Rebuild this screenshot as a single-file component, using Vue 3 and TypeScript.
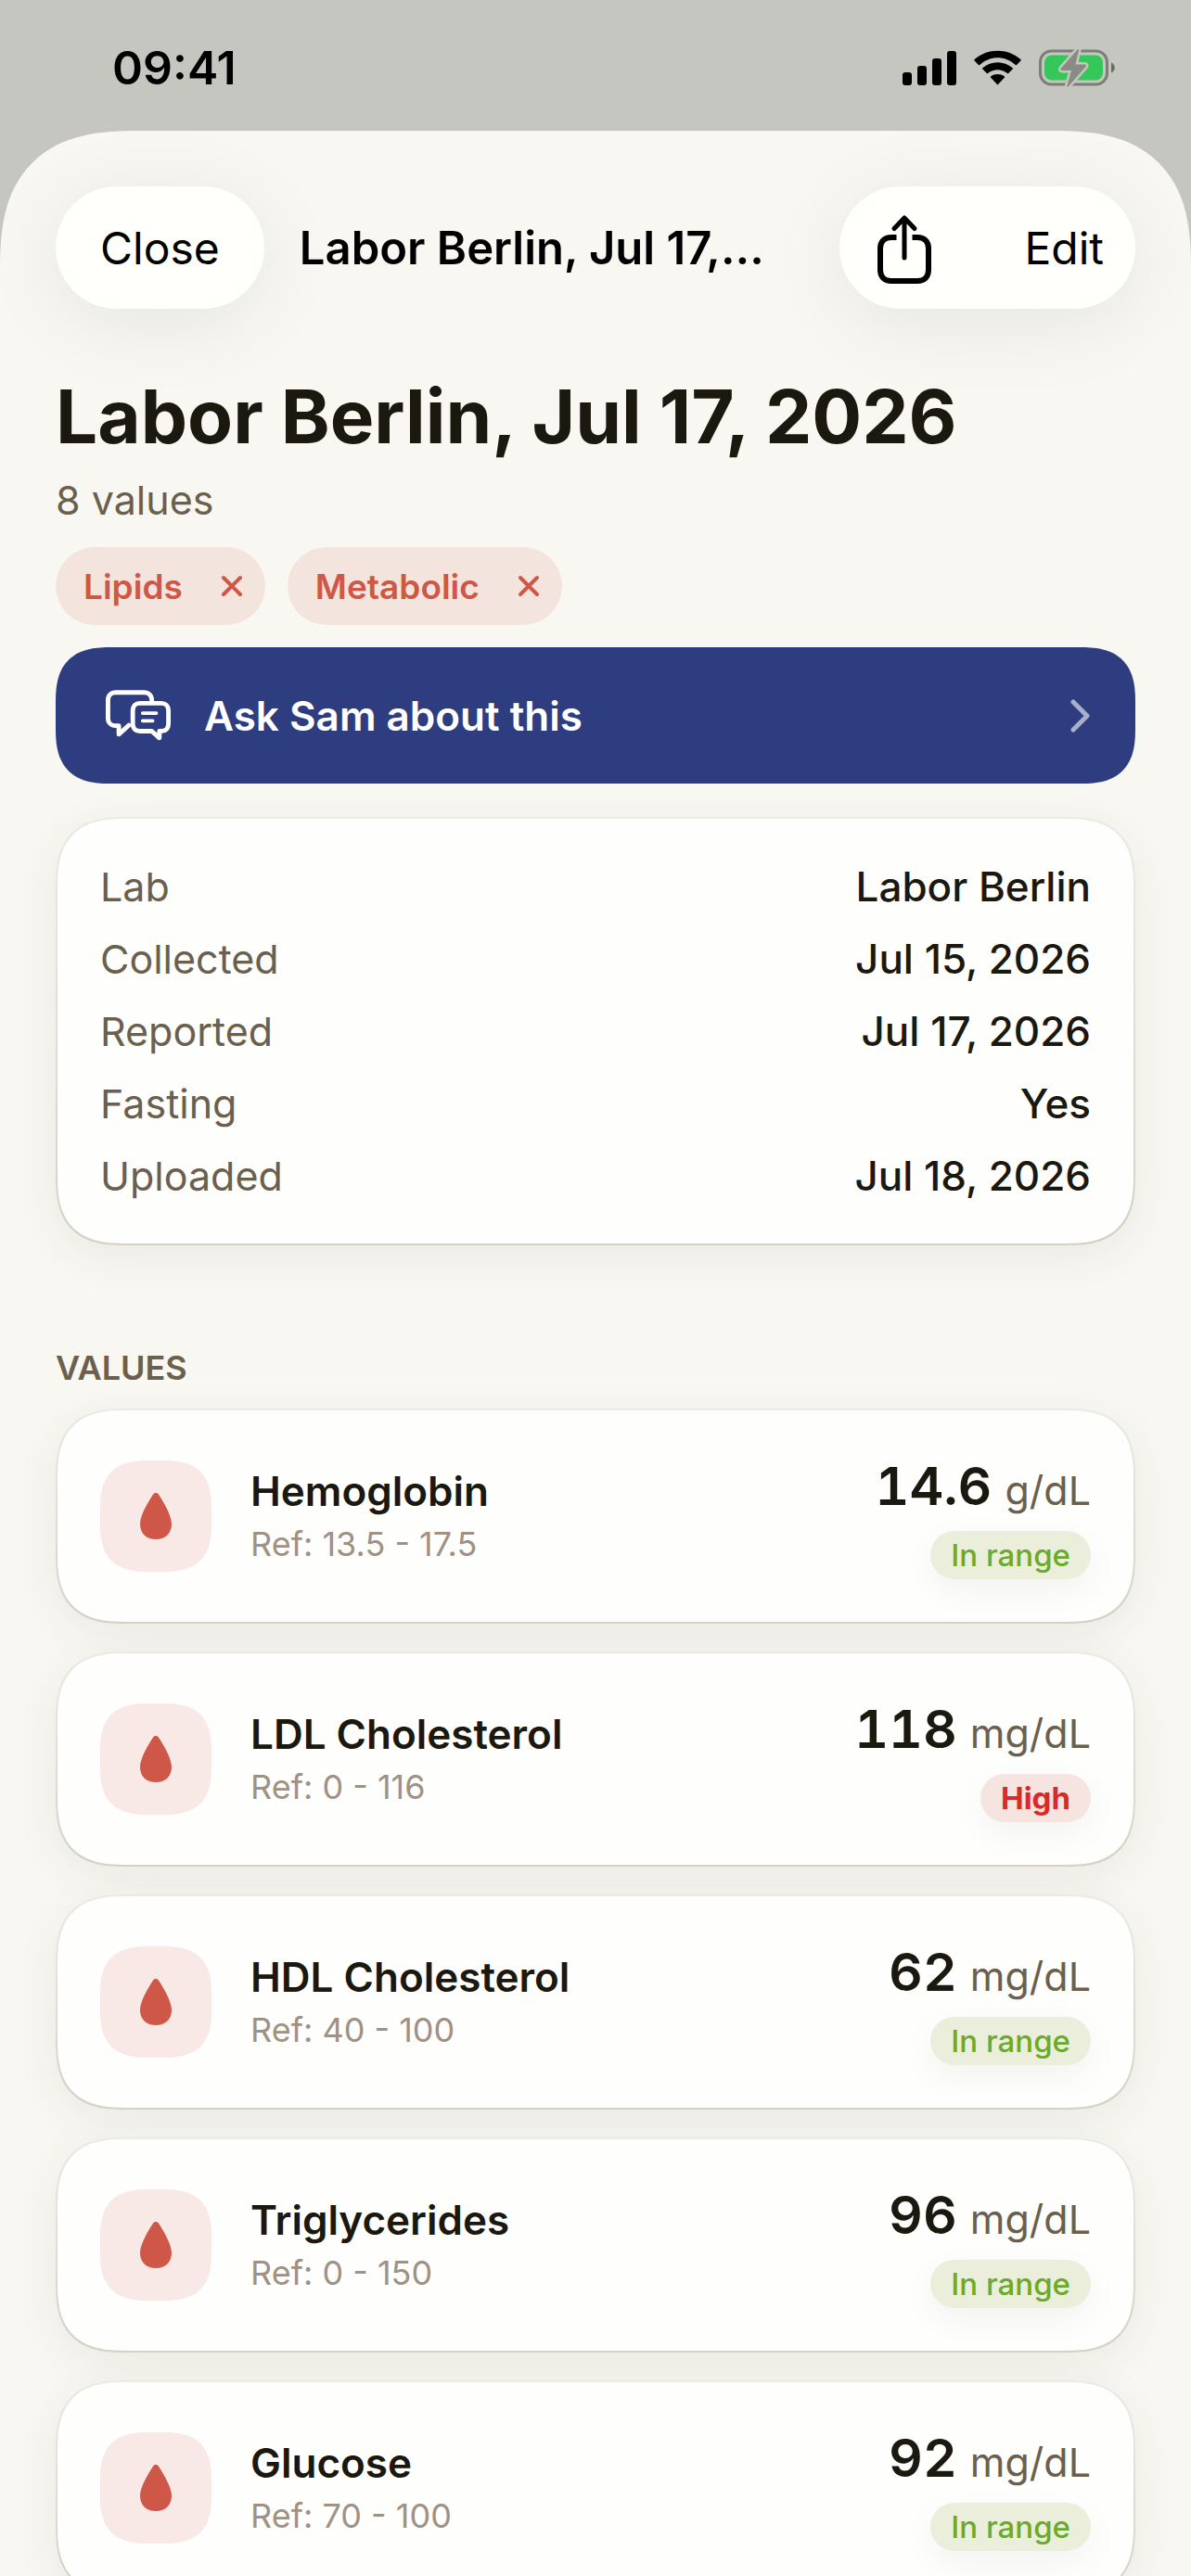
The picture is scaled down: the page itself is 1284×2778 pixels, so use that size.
<script setup lang="ts">
import { ref } from 'vue'

type Status = 'In range' | 'High'

interface LabValue {
  name: string
  range: string
  value: string
  unit: string
  status: Status
}

const tags = ref<string[]>(['Lipids', 'Metabolic'])

const details: { label: string; value: string }[] = [
  { label: 'Lab', value: 'Labor Berlin' },
  { label: 'Collected', value: 'Jul 15, 2026' },
  { label: 'Reported', value: 'Jul 17, 2026' },
  { label: 'Fasting', value: 'Yes' },
  { label: 'Uploaded', value: 'Jul 18, 2026' },
]

const values: LabValue[] = [
  { name: 'Hemoglobin', range: '13.5 - 17.5', value: '14.6', unit: 'g/dL', status: 'In range' },
  { name: 'LDL Cholesterol', range: '0 - 116', value: '118', unit: 'mg/dL', status: 'High' },
  { name: 'HDL Cholesterol', range: '40 - 100', value: '62', unit: 'mg/dL', status: 'In range' },
  { name: 'Triglycerides', range: '0 - 150', value: '96', unit: 'mg/dL', status: 'In range' },
  { name: 'Glucose', range: '70 - 100', value: '92', unit: 'mg/dL', status: 'In range' },
]

function removeTag(tag: string): void {
  tags.value = tags.value.filter((t) => t !== tag)
}
</script>

<template>
  <div class="screen">
    <header class="status-bar">
      <time class="clock">09:41</time>
      <div class="indicators">
        <svg width="58" height="38" viewBox="0 0 58 38" aria-label="Signal">
          <rect x="0" y="24" width="10" height="14" rx="3" />
          <rect x="16" y="17" width="10" height="21" rx="3" />
          <rect x="32" y="9" width="10" height="29" rx="3" />
          <rect x="48" y="1" width="10" height="37" rx="3" />
        </svg>
        <svg width="51" height="38" viewBox="0 0 51 38" aria-label="Wi-Fi">
          <path d="M0.600 11.500a1 1 0 0 1 0-1.400C14.500-2.500 36.500-2.500 50.400 10.100a1 1 0 0 1 0 1.400l-4.300 4.500a1 1 0 0 1-1.400 0C33.500 5.700 17.500 5.700 6.300 16a1 1 0 0 1-1.400 0z" />
          <path d="M9.300 20.600a1 1 0 0 1 0-1.400C18.500 11.200 32.500 11.200 41.700 19.200a1 1 0 0 1 0 1.400l-4.500 4.400a1 1 0 0 1-1.400 0C29.500 20 21.500 20 15.200 25a1 1 0 0 1-1.400 0z" />
          <path d="M18.200 29.800a1 1 0 0 1 0-1.500C22.500 25.200 28.500 25.200 32.800 28.300a1 1 0 0 1 0 1.500l-6.500 7a1 1 0 0 1-1.600 0z" />
        </svg>
        <svg width="83" height="42" viewBox="0 0 83 42" aria-label="Battery charging">
          <rect x="1.500" y="3" width="72" height="36" rx="12" fill="none" stroke="#7d7d77" stroke-width="3" />
          <rect x="6" y="7.500" width="63" height="27" rx="8" fill="#34c759" />
          <path d="M78 15.500c5 2 5 9 0 11z" fill="#6c6c67" />
          <path d="M41.500 1.500L24 21.500c-1 1.500-.5 2.500 1 2.500h10l-4.500 16c-.4 1.500.5 2 1.500 1L50.500 20c1-1.500.5-2.500-1-2.500H39.500L43 2.500c.3-1.500-.6-2-1.500-1z" fill="#8b8b85" stroke="#c6c6c1" stroke-width="5" stroke-linejoin="round" paint-order="stroke" />
        </svg>
      </div>
    </header>

    <main class="sheet">
      <nav class="toolbar">
        <button class="pill" type="button">Close</button>
        <p class="toolbar-title">Labor Berlin, Jul 17,…</p>
        <div class="pill-group">
          <button class="pill-action" type="button" aria-label="Share">
            <svg width="58" height="80" viewBox="0 -5 58 80" fill="none" stroke="#000" stroke-width="6" stroke-linecap="round" stroke-linejoin="round">
              <path d="M29 46V4M18 14.500L29 3l11 11.500" stroke-width="5" />
              <path d="M20.500 24H15C7.500 24 3 28.500 3 36v23c0 7.500 4.500 12 12 12h28c7.500 0 12-4.500 12-12V36c0-7.500-4.500-12-12-12h-5.500" stroke-linecap="butt" />
            </svg>
          </button>
          <button class="pill-action" type="button">Edit</button>
        </div>
      </nav>

      <h1>Labor Berlin, Jul 17, 2026</h1>
      <p class="count">8 values</p>

      <ul class="tags">
        <li v-for="tag in tags" :key="tag" class="tag">
          <span>{{ tag }}</span>
          <button type="button" class="tag-remove" :aria-label="`Remove ${tag}`" @click="removeTag(tag)">
            <svg width="24" height="24" viewBox="0 0 24 24" fill="none" stroke="currentColor" stroke-width="4" stroke-linecap="round">
              <path d="M3 3l18 18M21 3L3 21" />
            </svg>
          </button>
        </li>
      </ul>

      <button type="button" class="ask">
        <svg width="70" height="55" viewBox="0 0 72 56" fill="none" stroke="#fff" stroke-width="5" stroke-linecap="round" stroke-linejoin="round">
          <path d="M51 12.500V11c0-5-3.500-8.500-8.500-8.500H11C6 2.500 2.500 6 2.500 11v20c0 5 3.500 8.500 8.500 8.500h3.500V49l11-10" />
          <path d="M38 14.500h23.500c5 0 8 3 8 8v15c0 5-3 8-8 8H59.500v7.500L51 45.500H38c-5 0-8-3-8-8v-15c0-5 3-8 8-8z" />
          <path d="M41 25.500h15M41 34h11" stroke-width="4" />
        </svg>
        <span>Ask Sam about this</span>
        <svg class="chevron" width="22" height="36" viewBox="0 0 22 36" fill="none" stroke="#a9b0cd" stroke-width="5" stroke-linecap="round" stroke-linejoin="round">
          <path d="M3 3l15 15L3 33" />
        </svg>
      </button>

      <dl class="card details">
        <div v-for="row in details" :key="row.label" class="detail">
          <dt>{{ row.label }}</dt>
          <dd>{{ row.value }}</dd>
        </div>
      </dl>

      <h2>VALUES</h2>
      <ul class="values">
        <li v-for="item in values" :key="item.name" class="card value">
          <span class="tile">
            <svg width="34" height="50" viewBox="0 0 34 50" fill="#cf5748" aria-hidden="true">
              <path d="M13.800 2c1.600-2.600 4.800-2.600 6.400 0C25 9.500 34 24 34 33.500 34 43.500 27.500 50 17 50S0 43.500 0 33.500C0 24 9 9.500 13.800 2z" />
            </svg>
          </span>
          <div class="naming">
            <h3>{{ item.name }}</h3>
            <p>Ref: {{ item.range }}</p>
          </div>
          <div class="result">
            <p class="reading"><strong>{{ item.value }}</strong><span>{{ item.unit }}</span></p>
            <span class="badge" :class="{ high: item.status === 'High' }">{{ item.status }}</span>
          </div>
        </li>
      </ul>
    </main>
  </div>
</template>

<style>
body {
  background: #c6c6c1;
}
</style>

<style scoped>
.screen {
  display: flex;
  flex-direction: column;
  height: 100vh;
  overflow: hidden;
  background: #c6c6c1;
  color: #1b1810;
  font-family: Inter, "Liberation Sans", sans-serif;
  font-size: 44px;
}

h1, h2, h3, p, ul, dl, dd {
  margin: 0;
  padding: 0;
}

ul {
  list-style: none;
}

button {
  margin: 0;
  padding: 0;
  border: 0;
  background: none;
  color: inherit;
  font: inherit;
  cursor: pointer;
}

svg {
  display: block;
  flex: none;
}

.status-bar {
  display: flex;
  flex: none;
  align-items: center;
  justify-content: space-between;
  height: 141px;
  padding: 4px 81px 0 121px;
  box-sizing: border-box;
  color: #000;
}

.clock {
  font-size: 50px;
  font-weight: 600;
}

.indicators {
  display: flex;
  align-items: center;
  gap: 19px;
}

.sheet {
  flex: 1;
  min-height: 0;
  padding: 60px 60px 0;
  overflow-y: auto;
  scrollbar-width: none;
  border-radius: 150px 150px 0 0;
  corner-shape: superellipse(1.4);
  background: #f8f7f2;
}

.toolbar {
  display: flex;
  align-items: center;
  color: #000;
  font-size: 48px;
}

.pill,
.pill-group {
  height: 132px;
  border-radius: 66px;
  background: #fffffb;
  box-shadow: 0 14px 90px rgba(0, 0, 0, 0.08);
}

.pill {
  padding: 0 48px;
}

.toolbar-title {
  flex: 1;
  padding: 0 38px;
  font-size: 49px;
  font-weight: 600;
  white-space: nowrap;
}

.pill-group {
  display: flex;
  align-items: center;
  gap: 100px;
  padding: 0 34px 0 41px;
}

h1 {
  margin-top: 66px;
  font-size: 80px;
  font-weight: 700;
  line-height: 100px;
  white-space: nowrap;
}

.count {
  margin-top: 10px;
  color: #6b5f4e;
  font-size: 43px;
  line-height: 60px;
}

.tags {
  display: flex;
  gap: 24px;
  margin-top: 21px;
}

.tag {
  display: flex;
  align-items: center;
  gap: 41px;
  height: 84px;
  padding: 0 24px 0 30px;
  border-radius: 42px;
  background: #f4e4de;
  color: #cf5748;
  font-size: 37px;
  font-weight: 600;
}

.ask {
  display: flex;
  align-items: center;
  gap: 36px;
  width: 100%;
  height: 147px;
  margin-top: 24px;
  padding: 0 48px 0 54px;
  border-radius: 60px;
  corner-shape: superellipse(1.4);
  background: #2d3d80;
  color: #fff;
  font-weight: 600;
}

.chevron {
  margin-left: auto;
}

.card {
  border: 2px solid transparent;
  border-radius: 75px;
  corner-shape: superellipse(1.4);
  background:
    linear-gradient(#fefefd, #fefefd) padding-box,
    linear-gradient(#ebeae6, #d5d1c5) border-box;
  box-shadow: 0 12px 48px rgba(60, 55, 40, 0.07);
}

.details {
  margin-top: 36px;
  padding: 34px 46px;
}

.detail {
  display: flex;
  align-items: center;
  justify-content: space-between;
  line-height: 78px;
}

.detail dt {
  color: #6b5f4e;
  font-size: 43px;
}

.detail dd {
  font-weight: 500;
}

h2 {
  margin: 107px 0 19px;
  color: #6b5f4e;
  font-size: 36px;
  font-weight: 600;
  line-height: 50px;
}

.values {
  display: flex;
  flex-direction: column;
  gap: 30px;
  padding-bottom: 60px;
}

.value {
  display: flex;
  align-items: center;
  height: 228px;
  padding: 0 46px;
}

.tile {
  display: grid;
  place-items: center;
  width: 120px;
  height: 120px;
  border-radius: 52px;
  corner-shape: superellipse(1.4);
  background: #f8e9e7;
}

.naming {
  flex: 1;
  padding-left: 42px;
}

h3 {
  font-size: 44px;
  font-weight: 600;
  line-height: 60px;
}

.naming p {
  color: #9f9183;
  font-size: 36px;
  line-height: 54px;
}

.result {
  display: flex;
  flex-direction: column;
  align-items: flex-end;
  gap: 7px;
  padding-bottom: 2px;
}

.reading {
  display: flex;
  align-items: baseline;
  gap: 14px;
  line-height: 74px;
}

.reading strong {
  font-size: 57px;
  font-weight: 600;
  font-variant-numeric: tabular-nums;
}

.reading span {
  color: #6b5f4e;
  font-size: 43px;
}

.badge {
  padding: 0 22px;
  border-radius: 26px;
  background: #ebeeda;
  box-shadow: 0 12px 36px rgba(0, 0, 0, 0.05);
  color: #6aaa2c;
  font-size: 33px;
  font-weight: 500;
  line-height: 52px;
}

.badge.high {
  background: #f6e4e1;
  color: #d92a2a;
  font-weight: 700;
}
</style>
